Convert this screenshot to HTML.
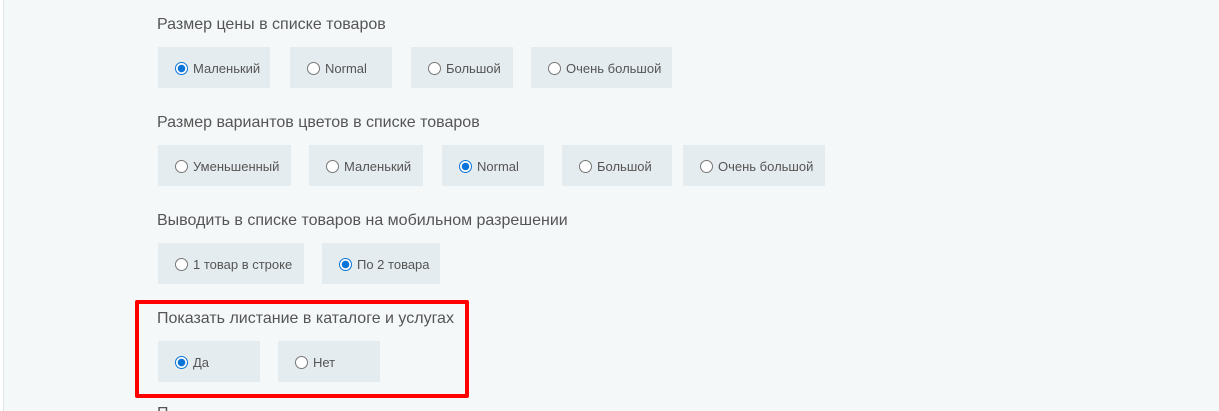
<!DOCTYPE html>
<html style="width:1219px;height:411px;overflow:hidden"><head><meta charset="utf-8"><style>
body{margin:0;width:1219px;height:411px;overflow:hidden;background:#f5f8f9;font-family:"Liberation Sans",sans-serif;position:relative}
.edge{position:absolute;left:0;top:0;width:3px;height:411px;background:#fff;border-right:1px solid #dde5ea}
.lbl{position:absolute;left:157px;font-size:16px;color:#555;line-height:20px}
.b{position:absolute;height:41px;background:#e5ecef;font-size:13px;color:#555;line-height:43px;box-sizing:border-box;padding-left:35px}
.b::before{content:"";position:absolute;left:17px;top:15px;width:11px;height:11px;border:1px solid #767676;border-radius:50%;background:#fff}
.b.on::before{border-color:#0a74d8;background:radial-gradient(circle,#0a74d8 0 3.5px,#fff 4px)}
.red{position:absolute;left:135px;top:300px;width:334px;height:98px;border:4px solid #f00;box-sizing:border-box;border-radius:2px}
</style></head><body>
<div class="edge"></div>
<div class="lbl" style="top:15px">Размер цены в списке товаров</div>
<div class="b on" style="top:47px;left:158px;width:112px">Маленький</div>
<div class="b" style="top:47px;left:290px;width:102px">Normal</div>
<div class="b" style="top:47px;left:411px;width:102px">Большой</div>
<div class="b" style="top:47px;left:531px;width:141px">Очень большой</div>
<div class="lbl" style="top:113px">Размер вариантов цветов в списке товаров</div>
<div class="b" style="top:145px;left:158px;width:133px">Уменьшенный</div>
<div class="b" style="top:145px;left:309px;width:114px">Маленький</div>
<div class="b on" style="top:145px;left:442px;width:102px">Normal</div>
<div class="b" style="top:145px;left:562px;width:110px">Большой</div>
<div class="b" style="top:145px;left:683px;width:142px">Очень большой</div>
<div class="lbl" style="top:211px">Выводить в списке товаров на мобильном разрешении</div>
<div class="b" style="top:243px;left:158px;width:146px">1 товар в строке</div>
<div class="b on" style="top:243px;left:322px;width:118px">По 2 товара</div>
<div class="lbl" style="top:309px">Показать листание в каталоге и услугах</div>
<div class="b on" style="top:341px;left:158px;width:102px">Да</div>
<div class="b" style="top:341px;left:278px;width:102px">Нет</div>
<div class="red"></div>
<div class="lbl" style="top:404px;height:7px;overflow:hidden">П</div>
</body></html>
